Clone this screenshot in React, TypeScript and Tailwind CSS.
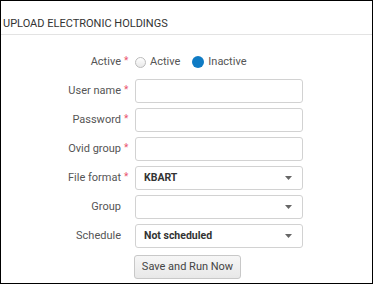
import React from "react";

const Caret = () => (
  <svg width="7" height="4" viewBox="0 0 7 4" className="shrink-0">
    <path d="M0 0h7L3.5 4z" fill="#666" />
  </svg>
);

const Label = ({ text, required }: { text: string; required?: boolean }) => (
  <div className="flex h-6 items-center justify-end">
    <span className="relative text-[11px] text-[#555]">
      {text}
      {required && (
        <span className="absolute left-full top-[-1px] ml-[3px] text-[10px] text-[#e9546b]">*</span>
      )}
    </span>
  </div>
);

const TextBox = () => (
  <div className="h-6 w-[168px] rounded-[3px] border border-[#d2d2d2] bg-white" />
);

const SelectBox = ({ value }: { value?: string }) => (
  <div className="flex h-6 w-[168px] items-center justify-between rounded-[3px] border border-[#d2d2d2] bg-white pl-[8px] pr-[10px]">
    <span className="text-[10.5px] font-bold text-[#333]">{value ?? ""}</span>
    <Caret />
  </div>
);

export default function App() {
  return (
    <div
      className="h-[284px] w-[373px] border border-black bg-white"
      style={{ fontFamily: "Roboto, 'Liberation Sans', sans-serif" }}
    >
      <div className="h-[34px] border-b border-[#e3e3e3] pl-[2px] pt-[16px] text-[11px] leading-[13px] text-[#333]">
        UPLOAD ELECTRONIC HOLDINGS
      </div>
      <div className="grid grid-cols-[120px_168px] gap-x-[14px] gap-y-[5px] pt-[15px]">
        <Label text="Active" required />
        <div className="flex h-6 items-center text-[11px] text-[#555]">
          <span className="h-[11px] w-[11px] rounded-full border border-[#bbb] bg-gradient-to-b from-white to-[#e8e8e8]" />
          <span className="ml-[4px]">Active</span>
          <span className="ml-[12px] h-[12px] w-[12px] rounded-full bg-[#0f7bc4]" />
          <span className="ml-[4px]">Inactive</span>
        </div>

        <Label text="User name" required />
        <TextBox />

        <Label text="Password" required />
        <TextBox />

        <Label text="Ovid group" required />
        <TextBox />

        <Label text="File format" required />
        <SelectBox value="KBART" />

        <Label text="Group" />
        <SelectBox />

        <Label text="Schedule" />
        <SelectBox value="Not scheduled" />

        <div />
        <div>
          <button className="-ml-px h-6 w-[107px] rounded-[3px] border border-[#c8c8c8] bg-gradient-to-b from-[#f6f6f6] to-[#e8e8e8] text-[11px] text-[#444]">
            Save and Run Now
          </button>
        </div>
      </div>
    </div>
  );
}
